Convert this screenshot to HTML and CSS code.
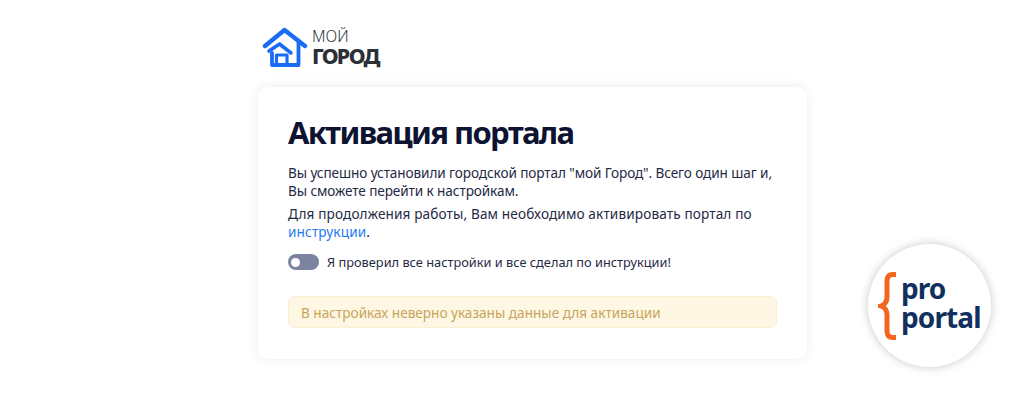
FILE: index.html
```html
<!DOCTYPE html>
<html lang="ru">
<head>
<meta charset="utf-8">
<title>Активация портала</title>
<link rel="stylesheet" href="styles.css">
</head>
<body>
<main class="page">
  <a class="logo" href="#">
    <svg class="logo-icon" width="46" height="42" viewBox="0 0 46 42" fill="none" stroke="#1a6cf5" stroke-linejoin="round" stroke-linecap="round">
      <path d="M3 20 L22.5 4 L43 20" stroke-width="4.4"/>
      <path d="M36.5 15 V39 H10 V27" stroke-width="3.8"/>
      <path d="M7 25 L17.5 18 L29 27" stroke-width="3.6"/>
      <path d="M14.5 39 V29 H25 V39" stroke-width="3.2"/>
    </svg>
    <span class="logo-text">
      <span class="logo-top">МОЙ</span>
      <span class="logo-bottom">ГОРОД</span>
    </span>
  </a>
  <section class="card">
    <h1 class="title">Активация портала</h1>
    <p class="text text-tight">Вы успешно установили городской портал "мой Город". Всего один шаг и,<br>Вы сможете перейти к настройкам.</p>
    <p class="text text-wide">Для продолжения работы, Вам необходимо активировать портал по <a class="link" href="#">инструкции</a>.</p>
    <label class="check">
      <span class="switch"><span class="knob"></span></span>
      <span class="check-label">Я проверил все настройки и все сделал по инструкции!</span>
    </label>
    <div class="alert">В настройках неверно указаны данные для активации</div>
  </section>
</main>
<aside class="badge">
  <svg class="brace" width="20" height="68" viewBox="0 0 20 68" fill="none" stroke="#f4661e" stroke-width="5">
    <path d="M18 2.5 H15 Q9 2.5 9 9 V25 Q9 32 3 34 Q9 36 9 43 V59 Q9 65.5 15 65.5 H18"/>
  </svg>
  <span class="badge-text"><span>pro</span><span>portal</span></span>
</aside>
</body>
</html>
```
FILE: styles.css
```css
* { box-sizing: border-box; }
html, body { margin: 0; height: 400px; overflow: hidden; background: #fff; }
body { font-family: "Noto Sans", sans-serif; color: #1f2a44; position: relative; }
.page { width: 549px; margin-left: 258px; padding-top: 25px; }
.logo { display: flex; align-items: center; gap: 4px; margin-left: 4px; height: 43px; color: #2b2f36; text-decoration: none; }
.logo-icon { flex: none; }
.logo-text { display: flex; flex-direction: column; line-height: 1; margin-top: 1px; }
.logo-top { font-size: 15.5px; font-weight: 300; line-height: 17px; }
.logo-bottom { font-size: 21.5px; font-weight: 800; line-height: 21px; letter-spacing: -1.7px; }
.card { margin-top: 19px; height: 272px; padding: 24px 30px 0; background: #fff; border-radius: 10px; box-shadow: 0 0 12px rgba(30, 40, 70, 0.09); }
.title { margin: 0 0 11px; font-size: 31px; line-height: 42px; font-weight: 700; color: #0d1330; letter-spacing: -1.6px; }
.text { margin: 0 0 6px; font-size: 13.6px; line-height: 17.5px; color: #1f2a44; }
.text-tight { letter-spacing: -0.1px; white-space: nowrap; }
.text-wide { letter-spacing: 0.13px; }
.link { color: #1f7bf2; text-decoration: none; }
.check { display: flex; align-items: center; gap: 8px; margin-top: 13px; }
.switch { width: 31px; height: 16px; border-radius: 8px; background: #7c83a0; display: flex; align-items: center; padding-left: 3px; }
.knob { width: 9px; height: 9px; border-radius: 50%; background: #fff; }
.check-label { font-size: 12.75px; line-height: 18px; letter-spacing: 0.02px; color: #1f2a44; }
.alert { margin-top: 25px; height: 32px; padding: 0 12px; display: flex; align-items: center; background: #fef7e4; border: 1px solid #fcefd0; border-radius: 7px; font-size: 13.6px; color: #c9a45c; }
.badge { position: absolute; left: 868px; top: 244px; width: 123px; height: 123px; border-radius: 50%; background: #fff; box-shadow: 0 0 10px rgba(0, 0, 0, 0.22); display: flex; align-items: center; padding-left: 10px; gap: 3px; }
.brace { flex: none; }
.badge-text { display: flex; flex-direction: column; margin-top: -6px; font-weight: 700; font-size: 28px; line-height: 29px; color: #12305f; letter-spacing: -0.9px; }
```
